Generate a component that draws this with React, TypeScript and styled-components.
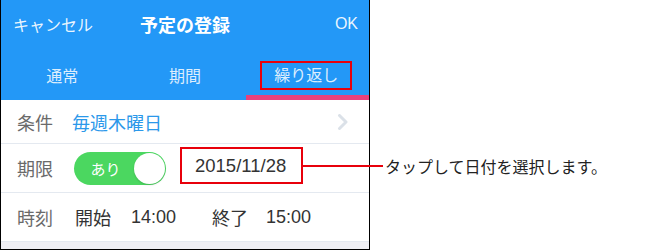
import React from "react";
import styled, { createGlobalStyle } from "styled-components";

const Global = createGlobalStyle`
  html, body { margin: 0; padding: 0; background: #fff; }
  body { font-family: "Liberation Sans", "Noto Sans CJK JP", sans-serif; }
`;

const Page = styled.div`
  display: flex;
  width: 670px;
  height: 250px;
`;

const Phone = styled.div`
  width: 370px;
  height: 250px;
  box-sizing: border-box;
  border: 1px solid #000;
  border-top: none;
  display: flex;
  flex-direction: column;
  background: #efeff4;
`;

const Header = styled.div`
  height: 50px;
  background: #2398f7;
  display: flex;
  align-items: center;
  justify-content: space-between;
  padding: 0 11px 2px 12px;
  box-sizing: border-box;
  color: #fff;
  position: relative;
`;

const HeaderButton = styled.span`
  font-size: 16px;
  color: rgba(255, 255, 255, 0.92);
`;

const Title = styled.span`
  font-size: 18px;
  font-weight: bold;
  position: absolute;
  left: 0;
  right: 0;
  text-align: center;
  pointer-events: none;
`;

const Tabs = styled.div`
  height: 50px;
  background: #2398f7;
  display: flex;
`;

const Tab = styled.div<{ $active?: boolean }>`
  flex: 1;
  display: flex;
  align-items: center;
  justify-content: center;
  font-size: 16px;
  color: rgba(255, 255, 255, 0.85);
  box-shadow: ${(p) => (p.$active ? "inset 0 -5px 0 #e8417c" : "none")};
`;

const Highlight = styled.span`
  border: 2px solid #e8000b;
  padding: 2px 12px;
  line-height: 21px;
  margin-right: 3px;
`;

const Row = styled.div<{ $h: number }>`
  height: ${(p) => p.$h}px;
  background: #fff;
  border-bottom: 1px solid #e4e9f0;
  display: flex;
  align-items: center;
  padding-left: 16px;
  padding-right: 20px;
  font-size: 18px;
  color: #333;
  flex-shrink: 0;
`;

const Label = styled.span`
  width: 55px;
  flex-shrink: 0;
  color: #6a6a6a;
`;

const Value = styled.span<{ $color?: string; $ml?: number }>`
  color: ${(p) => p.$color || "#333"};
  margin-left: ${(p) => p.$ml || 0}px;
`;

const Chevron = styled.svg`
  margin-left: auto;
  margin-top: 1px;
`;

const Toggle = styled.div`
  width: 92px;
  height: 33px;
  border-radius: 17px;
  background: #4bd760;
  margin-left: 2px;
  display: flex;
  align-items: center;
  box-sizing: border-box;
  padding: 1px;
  flex-shrink: 0;
`;

const ToggleText = styled.span`
  flex: 1;
  text-align: center;
  color: #fff;
  font-size: 15px;
  padding-left: 2px;
`;

const Knob = styled.span`
  width: 31px;
  height: 31px;
  border-radius: 50%;
  background: #fff;
  box-shadow: 0 1px 2px rgba(0, 0, 0, 0.15);
`;

const DateBox = styled.div`
  position: relative;
  margin-left: 14px;
  width: 123px;
  height: 37px;
  box-sizing: border-box;
  border: 2px solid #e8000b;
  display: flex;
  align-items: center;
  padding-left: 13px;
  margin-top: -5px;
  font-size: 18.5px;
`;

const Callout = styled.div`
  position: absolute;
  left: 100%;
  top: 50%;
  display: flex;
  align-items: center;
  white-space: nowrap;
  transform: translateY(-50%);
`;

const CalloutLine = styled.span`
  width: 82px;
  height: 2px;
  background: #e8000b;
`;

const CalloutText = styled.span`
  margin-left: 2px;
  font-size: 16px;
  color: #222;
`;

const Filler = styled.div`
  flex: 1;
`;

export default function App() {
  return (
    <>
      <Global />
      <Page>
        <Phone>
          <Header>
            <HeaderButton>キャンセル</HeaderButton>
            <Title>予定の登録</Title>
            <HeaderButton>OK</HeaderButton>
          </Header>
          <Tabs>
            <Tab>通常</Tab>
            <Tab>期間</Tab>
            <Tab $active>
              <Highlight>繰り返し</Highlight>
            </Tab>
          </Tabs>
          <Row $h={43}>
            <Label>条件</Label>
            <Value $color="#2b98ea">毎週木曜日</Value>
            <Chevron width="12" height="16" viewBox="0 0 12 16">
              <path d="M2.5 1.5 L9 8 L2.5 14.5" fill="none" stroke="#dbe1e8" strokeWidth="3" strokeLinecap="round" strokeLinejoin="round" />
            </Chevron>
          </Row>
          <Row $h={48}>
            <Label>期限</Label>
            <Toggle>
              <ToggleText>あり</ToggleText>
              <Knob />
            </Toggle>
            <DateBox>
              2015/11/28
              <Callout>
                <CalloutLine />
                <CalloutText>タップして日付を選択します。</CalloutText>
              </Callout>
            </DateBox>
          </Row>
          <Row $h={48}>
            <Label>時刻</Label>
            <Value $ml={3}>開始</Value>
            <Value $ml={20}>14:00</Value>
            <Value $ml={36}>終了</Value>
            <Value $ml={18}>15:00</Value>
          </Row>
          <Filler />
        </Phone>
      </Page>
    </>
  );
}
